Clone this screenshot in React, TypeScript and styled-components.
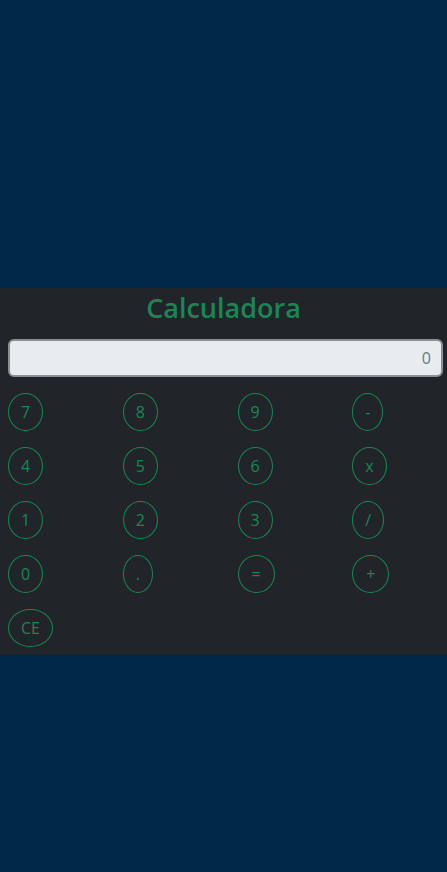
import React from "react";
import styled, { createGlobalStyle } from "styled-components";

const Global = createGlobalStyle`
  html, body { margin: 0; padding: 0; }
  body {
    background: #012749;
    font-family: "Open Sans", "Noto Sans", sans-serif;
    overflow: hidden;
  }
`;

const Page = styled.div`
  width: 447px;
  height: 872px;
  padding-top: 288px;
  box-sizing: border-box;
`;

const Panel = styled.section`
  background: #212529;
  padding: 0 0 8px 0;
  overflow: hidden;
`;

const Title = styled.h1`
  margin: 0;
  padding-top: 1px;
  height: 51px;
  box-sizing: border-box;
  text-align: center;
  color: #198754;
  font-size: 27px;
  font-weight: 600;
  line-height: 38px;
`;

const Display = styled.div`
  margin: 0 4px 16px 8px;
  height: 38px;
  box-sizing: border-box;
  border: 2px solid #8a8f95;
  border-radius: 6px;
  background: #e9ecef;
  color: #6c757d;
  font-size: 16px;
  line-height: 34px;
  text-align: right;
  padding: 0 10px;
`;

const Grid = styled.div`
  display: grid;
  grid-template-columns: repeat(4, 114.75px);
  row-gap: 16px;
  padding-left: 8px;
`;

const Key = styled.button<{ $wide?: boolean }>`
  justify-self: start;
  height: 38px;
  padding: 0 ${(p) => (p.$wide ? 13 : 12)}px;
  border: 1px solid #198754;
  border-radius: 50%;
  background: transparent;
  color: #198754;
  font-family: "Open Sans", "Noto Sans", sans-serif;
  font-size: 16px;
  line-height: 24px;
  cursor: pointer;
`;

const keys = ["7", "8", "9", "-", "4", "5", "6", "x", "1", "2", "3", "/", "0", ".", "=", "+", "CE"];

export default function App() {
  return (
    <>
      <Global />
      <Page>
        <Panel>
          <Title>Calculadora</Title>
          <Display>0</Display>
          <Grid>
            {keys.map((k) => (
              <Key key={k} $wide={k === "=" || k === "+"}>
                {k}
              </Key>
            ))}
          </Grid>
        </Panel>
      </Page>
    </>
  );
}
